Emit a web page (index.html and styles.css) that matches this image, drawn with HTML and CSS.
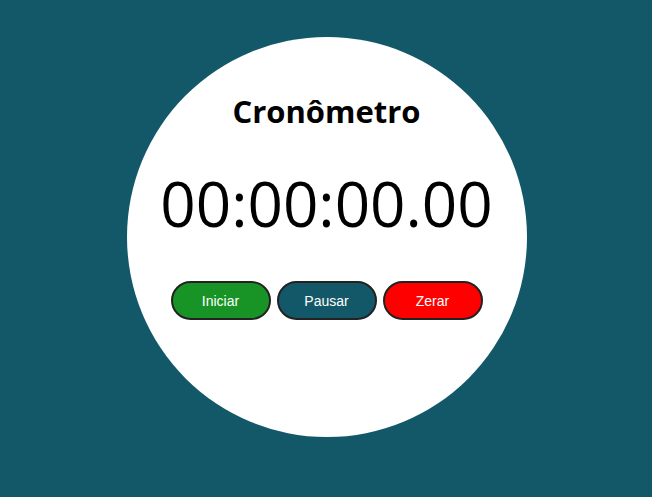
FILE: index.html
```html
<!DOCTYPE html>
<html lang="pt-BR">
<head>
<meta charset="utf-8">
<title>Cronômetro</title>
<link rel="stylesheet" href="styles.css">
</head>
<body>
<main class="page">
  <section class="watch">
    <h1 class="title">Cronômetro</h1>
    <div class="time">00:00:00.00</div>
    <div class="controls">
      <button class="btn btn-start">Iniciar</button>
      <button class="btn btn-pause">Pausar</button>
      <button class="btn btn-reset">Zerar</button>
    </div>
  </section>
</main>
</body>
</html>
```
FILE: styles.css
```css
html, body {
  margin: 0;
  padding: 0;
  height: 100%;
}
body {
  background: #135868;
  font-family: "Open Sans", sans-serif;
}
.page {
  display: flex;
  justify-content: center;
  padding-top: 37px;
}
.watch {
  width: 400px;
  height: 400px;
  border-radius: 50%;
  background: #fff;
  display: flex;
  flex-direction: column;
  align-items: center;
  margin-left: 1px;
}
.title {
  margin: 52px 0 0;
  font-size: 31px;
  font-weight: 700;
  line-height: 44px;
  color: #000;
}
.time {
  margin-top: 30px;
  font-size: 62px;
  line-height: 80px;
  color: #000;
}
.controls {
  display: flex;
  gap: 6px;
  margin-top: 38px;
}
.btn {
  width: 100px;
  height: 39px;
  border: 2px solid #222;
  border-radius: 20px;
  color: #fff;
  font-family: "Liberation Sans", Arial, sans-serif;
  font-size: 14px;
  cursor: pointer;
}
.btn-start { background: #189426; }
.btn-pause { background: #135868; }
.btn-reset { background: #ff0000; }
```
